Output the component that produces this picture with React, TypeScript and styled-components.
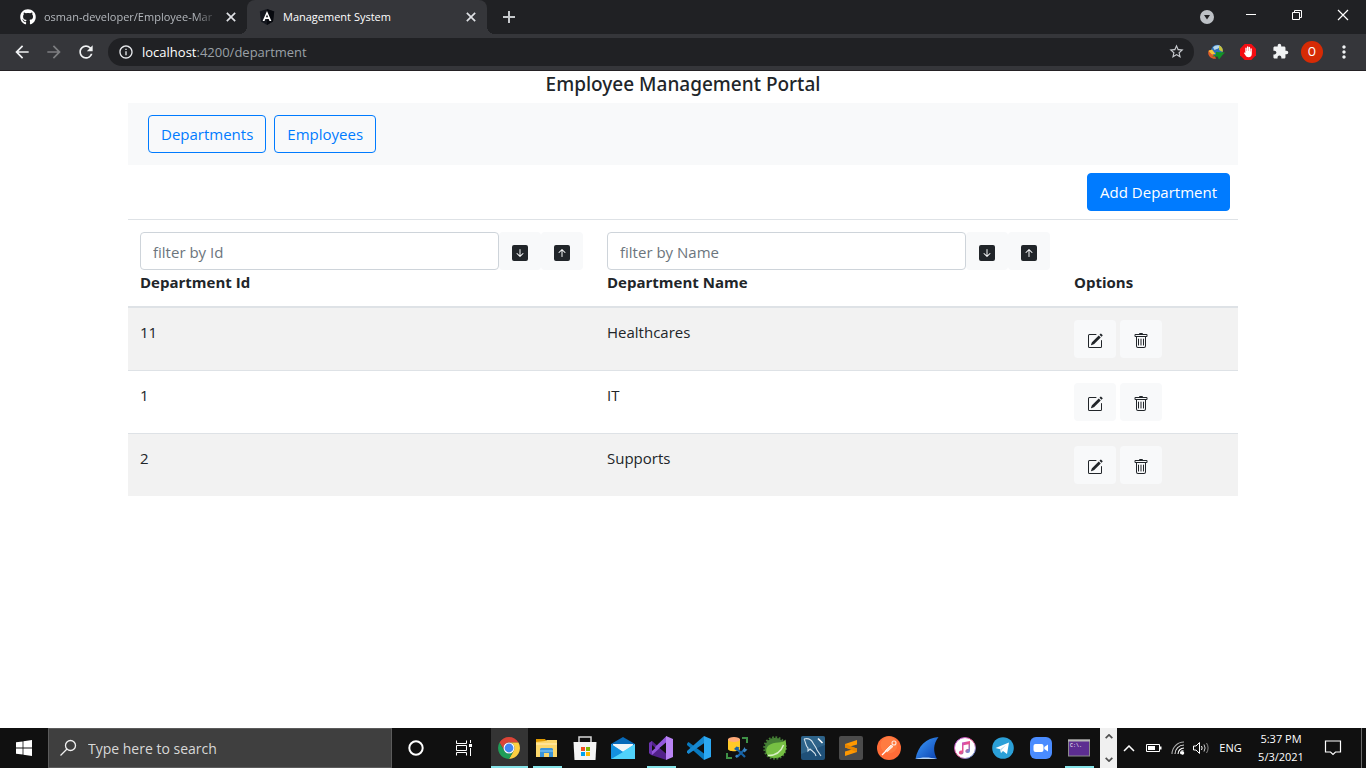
import React from "react";
import styled, { createGlobalStyle, css } from "styled-components";
import { FaGithub } from "react-icons/fa";
import {
  MdArrowBack,
  MdArrowForward,
  MdExtension,
  MdInfoOutline,
  MdMoreVert,
  MdRefresh,
  MdStarBorder,
} from "react-icons/md";
import {
  BsArrowDownSquareFill,
  BsArrowUpSquareFill,
  BsPencilSquare,
  BsTrash,
} from "react-icons/bs";

const uiFont = `"Segoe UI", "Open Sans", "Noto Sans", sans-serif`;

const GlobalStyle = createGlobalStyle`
  *, *::before, *::after { box-sizing: border-box; }
  body {
    margin: 0;
    background: #fff;
    color: #212529;
    font-family: ${uiFont};
    font-size: 15px;
    line-height: 24px;
  }
  button, input { font: inherit; color: inherit; }
  button { border: 0; background: none; padding: 0; cursor: pointer; }
  svg { display: block; flex: none; }
`;

const Screen = styled.div`
  display: flex;
  flex-direction: column;
  min-height: 100vh;
`;

/* ---------- Browser frame ---------- */

const TabStrip = styled.header`
  display: flex;
  height: 34px;
  background: #202124;
  color: #fff;
  font-size: 11px;
  line-height: 16px;
`;

const Tab = styled.div<{ $active?: boolean }>`
  position: relative;
  display: flex;
  align-items: center;
  width: ${(p) => (p.$active ? 240 : 247)}px;
  padding: 0 8px 0 ${(p) => (p.$active ? 12 : 20)}px;
  color: ${(p) => (p.$active ? "#fff" : "#b4b8bd")};
  ${(p) =>
    p.$active &&
    css`
      background: #35363a;
      border-radius: 8px 8px 0 0;
      &::before,
      &::after {
        content: "";
        position: absolute;
        bottom: 0;
        width: 8px;
        height: 8px;
      }
      &::before {
        right: 100%;
        background: radial-gradient(circle at 0 0, transparent 8px, #35363a 8px);
      }
      &::after {
        left: 100%;
        background: radial-gradient(circle at 100% 0, transparent 8px, #35363a 8px);
      }
    `}
`;

const TabTitle = styled.button<{ $fade?: boolean }>`
  flex: 1;
  min-width: 0;
  margin: 0 4px 0 8px;
  overflow: hidden;
  white-space: nowrap;
  text-align: left;
  ${(p) =>
    p.$fade &&
    css`
      mask-image: linear-gradient(to right, #000 86%, transparent);
    `}
`;

const CloseTab = styled.button`
  display: grid;
  place-items: center;
  width: 16px;
  height: 16px;
  color: #dfe1e5;
`;

const NewTab = styled.button`
  display: grid;
  place-items: center;
  width: 44px;
  color: #c6c9cc;
`;

const WindowControls = styled.div`
  display: flex;
  margin-left: auto;
`;

const WindowButton = styled.button<{ $narrow?: boolean }>`
  display: grid;
  place-items: center;
  width: ${(p) => (p.$narrow ? 42 : 46)}px;
  height: ${(p) => (p.$narrow ? 34 : 29)}px;
  color: #fff;
`;

const Toolbar = styled.div`
  display: flex;
  align-items: center;
  height: 37px;
  padding: 0 6px 1px;
  background: #35363a;
  border-bottom: 1px solid #242124;
`;

const ToolButton = styled.button<{ $dim?: boolean }>`
  display: grid;
  place-items: center;
  width: 32px;
  height: 28px;
  color: ${(p) => (p.$dim ? "#7d7e81" : "#f1f3f4")};
`;

const AddressBar = styled.div`
  display: flex;
  flex: 1;
  align-items: center;
  min-width: 0;
  height: 28px;
  margin: 0 6px;
  padding: 0 2px 0 10px;
  border-radius: 14px;
  background: #202124;
  color: #e8eaed;
`;

const Url = styled.div`
  flex: 1;
  min-width: 0;
  margin-left: 8px;
  overflow: hidden;
  white-space: nowrap;
  color: #9aa0a6;
  font-size: 13px;
  line-height: 20px;
  b {
    color: #fff;
    font-weight: 400;
  }
`;

const Avatar = styled.span`
  display: grid;
  place-items: center;
  width: 22px;
  height: 22px;
  border-radius: 50%;
  background: #d62b05;
  color: #fff;
  font-family: Roboto, sans-serif;
  font-size: 12px;
  line-height: 22px;
`;

/* ---------- Portal page ---------- */

const Page = styled.main`
  flex: 1;
  width: 100%;
  max-width: 1140px;
  margin: 0 auto;
  padding: 0 15px 24px;
`;

const Title = styled.h1`
  margin: 0;
  padding: 1px 0 7px;
  font-family: "Segoe UI", "Noto Sans", sans-serif;
  font-size: 19px;
  font-weight: 500;
  line-height: 24px;
  text-align: center;
`;

const Nav = styled.nav`
  display: flex;
  gap: 8px;
  padding: 12px 20px;
  background: #f8f9fa;
`;

const buttonShape = css`
  height: 38px;
  padding: 0 12px;
  border: 1px solid #007bff;
  border-radius: 4px;
  white-space: nowrap;
`;

const NavLink = styled.a`
  ${buttonShape}
  line-height: 37px;
  color: #007bff;
  text-decoration: none;
`;

const Actions = styled.div`
  display: flex;
  justify-content: flex-end;
  padding: 8px;
`;

const PrimaryButton = styled.button`
  ${buttonShape}
  background: #007bff;
  color: #fff;
`;

const Table = styled.table`
  width: 100%;
  table-layout: fixed;
  border-spacing: 0;
`;

const OptionsCol = styled.col`
  width: 176px;
`;

const HeadCell = styled.th`
  padding: 12px;
  border-top: 1px solid #dee2e6;
  border-bottom: 2px solid #dee2e6;
  text-align: left;
  vertical-align: bottom;
  font-weight: 700;
`;

const FilterRow = styled.div`
  display: flex;
`;

const FilterInput = styled.input`
  flex: 1;
  min-width: 0;
  height: 38px;
  padding: 2px 12px 0;
  border: 1px solid #ced4da;
  border-radius: 4px;
  font-weight: 400;
  &::placeholder {
    color: #6c757d;
    opacity: 1;
  }
`;

const IconButton = styled.button`
  display: grid;
  place-items: center;
  width: 42px;
  height: 38px;
  padding-top: 4px;
  border-radius: 4px;
  background: #f8f9fa;
  color: #212529;
`;

const Row = styled.tr`
  &:nth-child(odd) {
    background: #f2f2f2;
  }
  & + & td {
    border-top: 1px solid #dee2e6;
  }
`;

const Cell = styled.td`
  padding: 12px;
  vertical-align: top;
`;

const Options = styled.div`
  display: flex;
  gap: 4px;
`;

/* ---------- Taskbar ---------- */

const Taskbar = styled.footer`
  display: flex;
  height: 40px;
  background: #101010;
  color: #fff;
`;

const TaskButton = styled.button`
  display: grid;
  place-items: center;
  width: 48px;
`;

const SearchBox = styled.label`
  display: flex;
  align-items: center;
  gap: 11px;
  flex: 0 1 344px;
  min-width: 0;
  padding: 0 10px;
  border: 1px solid #5b5b5b;
  background: #3f3f3f;
`;

const SearchInput = styled.input`
  flex: 1;
  min-width: 0;
  padding: 2px 0 0;
  border: 0;
  outline: 0;
  background: none;
  font-size: 14px;
  &::placeholder {
    color: #d8d8d8;
    opacity: 1;
  }
`;

const Apps = styled.div`
  display: flex;
  gap: 1px;
  padding-left: 3px;
`;

const AppButton = styled.button<{ $state?: "active" | "open" }>`
  position: relative;
  display: grid;
  place-items: center;
  width: 37px;
  padding-right: 1px;
  background: ${(p) => (p.$state === "active" ? "#343434" : "none")};
  ${(p) =>
    p.$state &&
    css`
      &::after {
        content: "";
        position: absolute;
        right: ${p.$state === "active" ? 0 : 4}px;
        bottom: 0;
        left: ${p.$state === "active" ? 0 : 4}px;
        height: 2px;
        background: #85e3e8;
      }
    `}
`;

const Scroller = styled.div`
  display: flex;
  flex-direction: column;
  justify-content: space-between;
  width: 17px;
  margin-left: 2px;
  background: #f0f0f0;
  color: #505050;
`;

const ScrollButton = styled.button`
  display: grid;
  place-items: center;
  height: 17px;
`;

const Tray = styled.div`
  display: flex;
  margin-left: auto;
  font-size: 11px;
  line-height: 18px;
`;

const TrayButton = styled.button<{ $w: number }>`
  display: grid;
  place-items: center;
  align-content: center;
  width: ${(p) => p.$w}px;
  white-space: nowrap;
`;

const ShowDesktop = styled.button`
  width: 5px;
  margin-left: 8px;
  border-left: 1px solid #6a6a6a;
`;

/* ---------- Icons ---------- */

const Cross = ({ size, weight }: { size: number; weight: number }) => (
  <svg width={size} height={size} viewBox="0 0 12 12" stroke="currentColor" strokeWidth={weight}>
    <path d="M1 1 11 11M11 1 1 11" />
  </svg>
);

const AngularMark = () => (
  <svg width="16" height="16" viewBox="0 0 16 16">
    <path d="M8 0 15.2 2.5 14 12.4 8 16 2 12.4.8 2.5Z" fill="#15181f" />
    <path d="M8 0 15.2 2.5 14 12.4 8 16Z" fill="#080a0f" />
    <path d="M8 2 12.4 12h-1.900l-.8-2.100H6.300L5.500 12H3.600Zm0 3.500L6.900 8.300h2.200Z" fill="#fff" fillRule="evenodd" />
  </svg>
);

const GlobeDownload = () => (
  <svg width="18" height="16" viewBox="0 0 18 16">
    <circle cx="10" cy="6.500" r="5.800" fill="#2b6fb8" />
    <path d="M6 3.500C8 .8 12 .4 14 2.500l-3 2-3.500 1.500Z" fill="#b5d6ea" />
    <path d="M12 1.500c3 1 4.500 4 3.600 6.500L12 6Z" fill="#c9c23c" />
    <path d="M2 6C-.5 10 3 15.500 9 14.800L8 12C6 11.500 5 9 5.500 6Z" fill="#df5c28" />
    <path d="M1.500 7 5 5.500 8.500 10 5 10.500Z" fill="#f3c63a" />
    <path d="M9 8 18 8.500 15.500 11 12 15.500 10.500 12.500 5 12.500 9 10.500Z" fill="#129326" />
  </svg>
);

const HandStop = () => (
  <svg width="16" height="16" viewBox="0 0 16 16">
    <path d="M4.700 0h6.600L16 4.700v6.600L11.300 16H4.700L0 11.300V4.700Z" fill="#f40d12" />
    <path
      d="M5.300 9V4.300a.7.7 0 0 1 1.400 0V7h.3V3a.7.7 0 0 1 1.400 0v4h.3V3.500a.7.7 0 0 1 1.400 0V7.500h.3V5a.7.7 0 0 1 1.400 0v4.800c0 2-1 3.400-3.200 3.400-1.700 0-2.600-.7-3.200-1.900L3.900 8.900c.6-.9 1.100-.4 1.400.1Z"
      fill="#fff"
    />
  </svg>
);

const WindowsLogo = () => (
  <svg width="16" height="16" viewBox="0 0 16 16" fill="#fff">
    <path d="M0 2.300 6.600 1.400V7.600H0ZM7.400 1.300 16 0V7.600H7.400ZM0 8.400H6.600V14.600L0 13.700ZM7.400 8.400H16V16L7.400 14.700Z" />
  </svg>
);

const SearchGlass = () => (
  <svg width="18" height="18" viewBox="0 0 18 18" fill="none" stroke="#f0f0f0" strokeWidth="1.300">
    <circle cx="11.500" cy="6.500" r="5" />
    <path d="M8 10 1.500 16.500" />
  </svg>
);

const Cortana = () => (
  <svg width="16" height="16" viewBox="0 0 16 16">
    <circle cx="8" cy="8" r="6.700" fill="none" stroke="#fff" strokeWidth="2" />
  </svg>
);

const TaskView = () => (
  <svg width="16" height="16" viewBox="0 0 16 16" fill="none" stroke="#fff">
    <path d="M.5.5V3.500H10.500V.5M.5 15.500V12.500H10.500V15.500M.5 5.500H10.500V10.500H.5ZM14.500 0V3M14.500 8V16" />
    <path d="M13 4h3v3h-3Z" fill="#fff" stroke="none" />
  </svg>
);

const Chrome = () => (
  <svg width="24" height="24" viewBox="0 0 24 24">
    <path d="M2.500 6.500A11 11 0 0 1 21.500 6.500H12A5.500 5.500 0 0 0 7.240 14.750Z" fill="#db4437" />
    <path d="M21.500 6.500A11 11 0 0 1 12 23L16.760 14.750A5.500 5.500 0 0 0 12 6.500Z" fill="#fdcf42" />
    <path d="M2.500 6.500A11 11 0 0 0 12 23L16.760 14.750A5.500 5.500 0 0 1 7.240 14.750Z" fill="#1f9d58" />
    <circle cx="12" cy="12" r="5.500" fill="#fff" />
    <circle cx="12" cy="12" r="4.400" fill="#4285f4" />
  </svg>
);

const Explorer = () => (
  <svg width="24" height="24" viewBox="0 0 24 24">
    <path d="M1 3h9l2 3H1Z" fill="#e09a00" />
    <path d="M1 6l9-1 2-1h10v17H1Z" fill="#fbd76c" />
    <path d="M1 7h21v2H1Z" fill="#ffe394" />
    <path d="M5 21v-8l1-1h11l1 1v8h-4v-4H9v4Z" fill="#3b94d9" />
    <path d="M5 14h13v2H5Z" fill="#62b2ea" />
  </svg>
);

const Store = () => (
  <svg width="24" height="24" viewBox="0 0 24 24">
    <path d="M6 7V1h12v6" fill="none" stroke="#d8d8d8" strokeWidth="1.500" />
    <path d="M.5 6h23l-1 18H1.500Z" fill="#f5f5f5" />
    <path d="M8 11h4v4H8Z" fill="#f25022" />
    <path d="M13 11h4v4h-4Z" fill="#7fba00" />
    <path d="M8 16h4v4H8Z" fill="#00a4ef" />
    <path d="M13 16h4v4h-4Z" fill="#ffb900" />
  </svg>
);

const Mail = () => (
  <svg width="24" height="24" viewBox="0 0 24 24">
    <path d="M0 8 12 1l12 7v5H0Z" fill="#0869b8" />
    <path d="M2 8h20v6l-10 4L2 12Z" fill="#f2f5f7" />
    <path d="M0 8 12 16 24 8v15H0Z" fill="#28a8ea" />
    <path d="M0 23 24 8v15Z" fill="#50d2fb" />
    <path d="M0 8 12 16 0 23Z" fill="#1490df" />
  </svg>
);

const VisualStudio = () => (
  <svg width="24" height="24" viewBox="0 0 24 24">
    <path d="M0 7 3 5 17.500 18V24L2 19 0 17Z" fill="#52218a" />
    <path d="M0 7 3 5V19L0 17Z" fill="#6c33af" />
    <path d="M3 19 17.500 6V0L3 14Z" fill="#9256dc" />
    <path d="M3 9 6.500 12 3 15Z" fill="#101010" />
    <path d="M17 0 24 3V21L17 24Z" fill="#b983f4" />
    <path d="M17 7V17L10.500 12Z" fill="#101010" />
  </svg>
);

const VsCode = () => (
  <svg width="24" height="24" viewBox="0 0 24 24">
    <path d="M1.500 6 0 7.500V9L17 24V17.500Z" fill="#0879bf" />
    <path d="M17 0 0 15v1.500L1.500 18 18 6.500Z" fill="#1688d1" />
    <path d="M17 0 24 3V21L17 24Z" fill="#2ba8f2" />
  </svg>
);

const DataTools = () => (
  <svg width="24" height="24" viewBox="0 0 24 24">
    <path d="M17 2h5v5M2 17v5h5" fill="none" stroke="#3f9147" strokeWidth="2" />
    <path d="M3 3v10c0 3 12 3 12 0V3Z" fill="#ffc928" />
    <ellipse cx="9" cy="3.500" rx="6" ry="2.500" fill="#ffa978" />
    <path d="M12 13 20 21M20 13 12 21" stroke="#1764a8" strokeWidth="2.200" />
    <path d="M9 13l2.500-2.500 3 1L12 15Z" fill="#1764a8" />
    <path d="M18 14.500 19.500 11l1 2 2 .5-3 3ZM10 20l2-1.500 1.500 1.500-2 2Z" fill="#3d86c4" />
  </svg>
);

const Spring = () => (
  <svg width="24" height="24" viewBox="0 0 24 24">
    <circle cx="12" cy="12" r="10.800" fill="none" stroke="#457f35" strokeWidth="2" strokeDasharray="1.800 1.600" />
    <circle cx="12" cy="12" r="10.300" fill="#457f35" />
    <path d="M22.500 3.500C20 8 11 5 5.500 9.500 2 12.500 3 18 5 20c5 3.500 17 3 18-7.500.4-3.500 0-6-.5-9Z" fill="#76c043" />
    <path d="M5 19.500C13 19.500 18 16 20.500 9" fill="none" stroke="#d8efc5" strokeWidth="1.500" />
  </svg>
);

const MySql = () => (
  <svg width="24" height="24" viewBox="0 0 24 24">
    <rect width="24" height="24" rx="2" fill="#1f5078" />
    <path d="M0 2a2 2 0 0 1 2-2h20a2 2 0 0 1 2 2v7L0 18Z" fill="#386f94" opacity=".6" />
    <path
      d="M3 3c4-1 7 0 9 4 1 2 3 4 4 7l4 6M3 3c2 3 1 6 4 9v3l2-2c2 2 5 3 6 7"
      fill="none"
      stroke="#d5e3ec"
      strokeWidth="1.100"
    />
    <path d="M17 2.500l2 2 2.500 2.500" stroke="#fff" strokeWidth="1.600" />
  </svg>
);

const Sublime = () => (
  <svg width="24" height="24" viewBox="0 0 24 24">
    <rect width="24" height="24" rx="2" fill="#4b4b4b" />
    <path d="M6 8 18 4V8.500L11 10.500 18 12.500V16L6 20V15.500L13 13.500 6 11.500Z" fill="#ff9800" />
    <path d="M6 8 18 12.500V16L6 11.500Z" fill="#e88600" />
  </svg>
);

const Postman = () => (
  <svg width="24" height="24" viewBox="0 0 24 24">
    <circle cx="12" cy="12" r="12" fill="#ff6c37" />
    <circle cx="12" cy="9" r="8.500" fill="#ff8a4c" opacity=".5" />
    <path d="M5 19 14 10" stroke="#fff" strokeWidth="1.200" />
    <path d="M8.500 14.500 14 9l2 1.500-5.500 5Z" fill="#ffe5da" stroke="#fff" strokeWidth=".7" />
    <circle cx="17" cy="7" r="2" fill="none" stroke="#ffe5da" strokeWidth="1.100" />
  </svg>
);

const Wireshark = () => (
  <svg width="24" height="24" viewBox="0 0 24 24">
    <defs>
      <linearGradient id="fin" x1="0" y1="0" x2="1" y2="1">
        <stop offset="0" stopColor="#3fa0ff" />
        <stop offset="1" stopColor="#0a3fae" />
      </linearGradient>
    </defs>
    <path d="M.5 23C3 10 11 2 23.500 1 18 8 18 16 22 23Z" fill="url(#fin)" />
    <path d="M.5 23c6-2 14-2 21.500 0Z" fill="#b9d6f5" />
  </svg>
);

const ITunes = () => (
  <svg width="24" height="24" viewBox="0 0 24 24">
    <defs>
      <linearGradient id="note" x1="0" y1="0" x2="1" y2="1">
        <stop offset="0" stopColor="#a35df0" />
        <stop offset=".5" stopColor="#ef4d86" />
        <stop offset="1" stopColor="#3da8f5" />
      </linearGradient>
    </defs>
    <circle cx="12" cy="12" r="10.500" fill="#fff" stroke="url(#note)" strokeWidth="1" />
    <path
      d="M9 6.500 17 5V15a2.300 2 0 1 1-1.500-1.900V8.300L10.500 9.300V16.500A2.300 2 0 1 1 9 14.600Z"
      fill="url(#note)"
    />
  </svg>
);

const Telegram = () => (
  <svg width="24" height="24" viewBox="0 0 24 24">
    <circle cx="12" cy="12" r="10.800" fill="#2ba0d8" />
    <path d="M4.500 12 18 6.500 16 18l-4-3-2 2-.8-3.800Z" fill="#fff" />
    <path d="M9.200 13.200 15 9l-4.500 5L10 17Z" fill="#b9dcef" />
  </svg>
);

const Zoom = () => (
  <svg width="24" height="24" viewBox="0 0 24 24">
    <rect x="1" y="1" width="22" height="22" rx="6" fill="#4a8cff" />
    <rect x="4.500" y="8" width="10" height="8" rx="2" fill="#fff" />
    <path d="M15.300 11 19 8.500V15.500L15.300 13Z" fill="#fff" />
  </svg>
);

const Terminal = () => (
  <svg width="24" height="24" viewBox="0 0 24 24">
    <rect x="1.500" y="4" width="21" height="16" fill="#5c2d91" stroke="#8b8b8b" />
    <path d="M1 4.500h22" stroke="#b7b7b7" strokeWidth="2" />
    <text x="3" y="11" fill="#fff" fontFamily="Liberation Mono, monospace" fontSize="5">
      C:\.
    </text>
  </svg>
);

const Chevron = ({ w, weight, down }: { w: number; weight: number; down?: boolean }) => (
  <svg width={w} height={w / 2 + 1} viewBox="0 0 12 7" fill="none" stroke="currentColor" strokeWidth={weight}>
    <path d={down ? "M1 1 6 6 11 1" : "M1 6 6 1 11 6"} />
  </svg>
);

const Battery = () => (
  <svg width="16" height="10" viewBox="0 0 16 10">
    <path d="M.5 1.500h13v7H.5Z" fill="none" stroke="#fff" />
    <path d="M2 3h7v4H2ZM14 3.500h1.500v3H14Z" fill="#fff" />
  </svg>
);

const Wifi = () => (
  <svg width="14" height="14" viewBox="0 0 14 14" fill="none" stroke="#fff" strokeWidth="1.100">
    <path d="M10 13A2 2 0 0 1 12.500 10" />
    <path d="M7 13A6 6 0 0 1 13 7" />
    <path d="M4 13A9 9 0 0 1 13 4" opacity=".85" />
    <path d="M1 13A12 12 0 0 1 13 1" opacity=".65" />
    <circle cx="11.500" cy="12" r="1.200" fill="#fff" />
  </svg>
);

const Volume = () => (
  <svg width="17" height="14" viewBox="0 0 17 14" fill="none" stroke="#fff">
    <path d="M.5 5H3L6.500 1.500V12.500L3 9H.5Z" />
    <path d="M8.500 5q1.300 2 0 4" />
    <path d="M11 3.500q2.200 3.500 0 7" opacity=".8" />
    <path d="M13.500 2q3.200 5 0 10" opacity=".5" />
  </svg>
);

const Notification = () => (
  <svg width="18" height="18" viewBox="0 0 18 18" fill="none" stroke="#fff" strokeWidth="1.200">
    <path d="M1.500 2h15v11H11.500L9 15.500 6.500 13H1.500Z" />
  </svg>
);

/* ---------- Data ---------- */

const departments = [
  { id: 11, name: "Healthcares" },
  { id: 1, name: "IT" },
  { id: 2, name: "Supports" },
];

const apps: { name: string; Icon: () => React.JSX.Element; state?: "active" | "open" }[] = [
  { name: "Google Chrome", Icon: Chrome, state: "active" },
  { name: "File Explorer", Icon: Explorer, state: "open" },
  { name: "Microsoft Store", Icon: Store },
  { name: "Mail", Icon: Mail },
  { name: "Visual Studio", Icon: VisualStudio, state: "open" },
  { name: "Visual Studio Code", Icon: VsCode },
  { name: "SQL Server Management Studio", Icon: DataTools },
  { name: "Spring Tool Suite", Icon: Spring },
  { name: "MySQL Workbench", Icon: MySql },
  { name: "Sublime Text", Icon: Sublime },
  { name: "Postman", Icon: Postman },
  { name: "Wireshark", Icon: Wireshark },
  { name: "iTunes", Icon: ITunes },
  { name: "Telegram", Icon: Telegram },
  { name: "Zoom", Icon: Zoom },
  { name: "Command Prompt", Icon: Terminal, state: "open" },
];

const Filter = ({ field }: { field: string }) => (
  <FilterRow>
    <FilterInput type="text" placeholder={`filter by ${field}`} aria-label={`filter by ${field}`} />
    <IconButton type="button" aria-label={`Sort by ${field} ascending`}>
      <BsArrowDownSquareFill size={16} />
    </IconButton>
    <IconButton type="button" aria-label={`Sort by ${field} descending`}>
      <BsArrowUpSquareFill size={16} />
    </IconButton>
  </FilterRow>
);

const BrowserFrame = () => (
  <>
    <TabStrip>
      <Tab>
        <FaGithub size={16} color="#fff" />
        <TabTitle type="button" $fade>
          osman-developer/Employee-Mar
        </TabTitle>
        <CloseTab type="button" aria-label="Close tab">
          <Cross size={10} weight={2} />
        </CloseTab>
      </Tab>
      <Tab $active>
        <AngularMark />
        <TabTitle type="button">Management System</TabTitle>
        <CloseTab type="button" aria-label="Close tab">
          <Cross size={10} weight={2} />
        </CloseTab>
      </Tab>
      <NewTab type="button" aria-label="New tab">
        <svg width="12" height="12" viewBox="0 0 12 12" stroke="currentColor" strokeWidth="2">
          <path d="M6 0V12M0 6H12" />
        </svg>
      </NewTab>
      <WindowControls>
        <WindowButton type="button" aria-label="Search tabs" $narrow>
          <svg width="14" height="14" viewBox="0 0 14 14">
            <circle cx="7" cy="7" r="7" fill="#bdc1c6" />
            <path d="M4 5h6L7 9.500Z" fill="#202124" />
          </svg>
        </WindowButton>
        <WindowButton type="button" aria-label="Minimize">
          <svg width="10" height="10" viewBox="0 0 10 10" stroke="currentColor">
            <path d="M0 4.500H10" />
          </svg>
        </WindowButton>
        <WindowButton type="button" aria-label="Restore">
          <svg width="10" height="10" viewBox="0 0 10 10" fill="none" stroke="currentColor">
            <path d="M.5 2.500h7v7h-7ZM2.500 2.500V.5h7v7h-2" />
          </svg>
        </WindowButton>
        <WindowButton type="button" aria-label="Close">
          <Cross size={12} weight={1.2} />
        </WindowButton>
      </WindowControls>
    </TabStrip>
    <Toolbar>
      <ToolButton type="button" aria-label="Back">
        <MdArrowBack size={20} />
      </ToolButton>
      <ToolButton type="button" aria-label="Forward" $dim>
        <MdArrowForward size={20} />
      </ToolButton>
      <ToolButton type="button" aria-label="Reload">
        <MdRefresh size={20} />
      </ToolButton>
      <AddressBar>
        <MdInfoOutline size={16} />
        <Url>
          <b>localhost</b>:4200/department
        </Url>
        <ToolButton type="button" aria-label="Bookmark this page">
          <MdStarBorder size={17} color="#c8cbcf" />
        </ToolButton>
      </AddressBar>
      <ToolButton type="button" aria-label="Download manager">
        <GlobeDownload />
      </ToolButton>
      <ToolButton type="button" aria-label="Ad blocker">
        <HandStop />
      </ToolButton>
      <ToolButton type="button" aria-label="Extensions">
        <MdExtension size={17} />
      </ToolButton>
      <ToolButton type="button" aria-label="Profile">
        <Avatar>O</Avatar>
      </ToolButton>
      <ToolButton type="button" aria-label="Menu">
        <MdMoreVert size={20} />
      </ToolButton>
    </Toolbar>
  </>
);

const DepartmentPage = () => (
  <Page>
    <Title>Employee Management Portal</Title>
    <Nav>
      <NavLink href="#department">Departments</NavLink>
      <NavLink href="#employee">Employees</NavLink>
    </Nav>
    <Actions>
      <PrimaryButton type="button">Add Department</PrimaryButton>
    </Actions>
    <Table>
      <colgroup>
        <col />
        <col />
        <OptionsCol />
      </colgroup>
      <thead>
        <tr>
          <HeadCell scope="col">
            <Filter field="Id" />
            Department Id
          </HeadCell>
          <HeadCell scope="col">
            <Filter field="Name" />
            Department Name
          </HeadCell>
          <HeadCell scope="col">Options</HeadCell>
        </tr>
      </thead>
      <tbody>
        {departments.map((d) => (
          <Row key={d.id}>
            <Cell>{d.id}</Cell>
            <Cell>{d.name}</Cell>
            <Cell>
              <Options>
                <IconButton type="button" aria-label={`Edit ${d.name}`}>
                  <BsPencilSquare size={16} />
                </IconButton>
                <IconButton type="button" aria-label={`Delete ${d.name}`}>
                  <BsTrash size={16} />
                </IconButton>
              </Options>
            </Cell>
          </Row>
        ))}
      </tbody>
    </Table>
  </Page>
);

const SystemTaskbar = () => (
  <Taskbar>
    <TaskButton type="button" aria-label="Start">
      <WindowsLogo />
    </TaskButton>
    <SearchBox>
      <SearchGlass />
      <SearchInput type="text" placeholder="Type here to search" aria-label="Type here to search" />
    </SearchBox>
    <TaskButton type="button" aria-label="Cortana">
      <Cortana />
    </TaskButton>
    <TaskButton type="button" aria-label="Task view">
      <TaskView />
    </TaskButton>
    <Apps>
      {apps.map(({ name, Icon, state }) => (
        <AppButton key={name} type="button" aria-label={name} $state={state}>
          <Icon />
        </AppButton>
      ))}
    </Apps>
    <Scroller>
      <ScrollButton type="button" aria-label="Scroll up">
        <Chevron w={8} weight={2.5} />
      </ScrollButton>
      <ScrollButton type="button" aria-label="Scroll down">
        <Chevron w={8} weight={2.5} down />
      </ScrollButton>
    </Scroller>
    <Tray>
      <TrayButton type="button" aria-label="Show hidden icons" $w={24}>
        <Chevron w={12} weight={1.5} />
      </TrayButton>
      <TrayButton type="button" aria-label="Battery" $w={25}>
        <Battery />
      </TrayButton>
      <TrayButton type="button" aria-label="Network" $w={24}>
        <Wifi />
      </TrayButton>
      <TrayButton type="button" aria-label="Volume" $w={22}>
        <Volume />
      </TrayButton>
      <TrayButton type="button" $w={37}>
        ENG
      </TrayButton>
      <TrayButton type="button" $w={64}>
        <span>5:37 PM</span>
        <span>5/3/2021</span>
      </TrayButton>
      <TrayButton type="button" aria-label="Notifications" $w={40}>
        <Notification />
      </TrayButton>
      <ShowDesktop type="button" aria-label="Show desktop" />
    </Tray>
  </Taskbar>
);

export default function App() {
  return (
    <Screen>
      <GlobalStyle />
      <BrowserFrame />
      <DepartmentPage />
      <SystemTaskbar />
    </Screen>
  );
}
